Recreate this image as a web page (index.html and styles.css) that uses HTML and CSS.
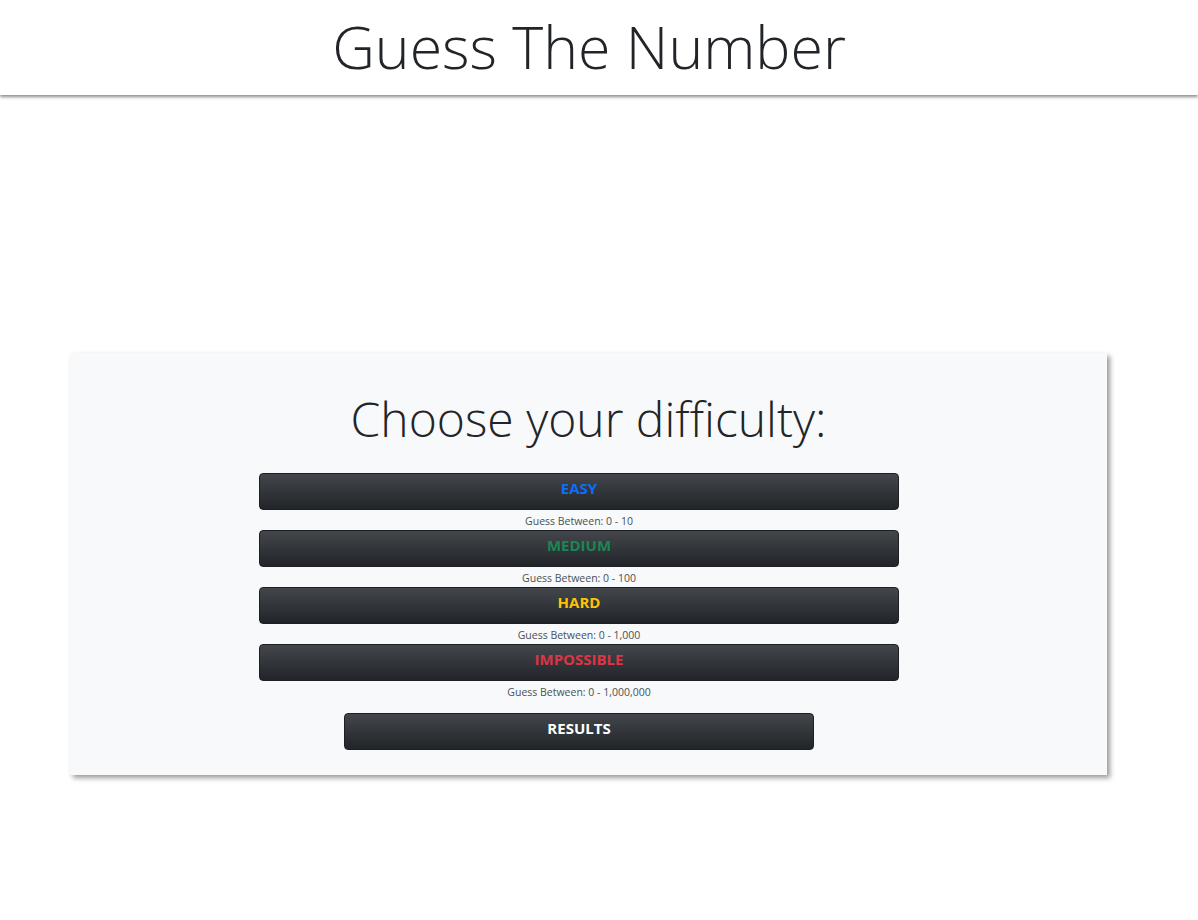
FILE: index.html
```html
<!DOCTYPE html>
<html lang="en">
<head>
<meta charset="utf-8">
<title>Guess The Number</title>
<link rel="stylesheet" href="styles.css">
</head>
<body>
<header class="topbar">
  <h1 class="title">Guess The Number</h1>
</header>
<main class="main">
  <section class="card">
    <h2 class="card-title">Choose your difficulty:</h2>
    <div class="levels">
      <div class="level">
        <button class="btn btn-easy">EASY</button>
        <p class="hint">Guess Between: 0 - 10</p>
      </div>
      <div class="level">
        <button class="btn btn-medium">MEDIUM</button>
        <p class="hint">Guess Between: 0 - 100</p>
      </div>
      <div class="level">
        <button class="btn btn-hard">HARD</button>
        <p class="hint">Guess Between: 0 - 1,000</p>
      </div>
      <div class="level">
        <button class="btn btn-impossible">IMPOSSIBLE</button>
        <p class="hint">Guess Between: 0 - 1,000,000</p>
      </div>
      <button class="btn btn-results">RESULTS</button>
    </div>
  </section>
</main>
</body>
</html>
```
FILE: styles.css
```css
* { box-sizing: border-box; }
html, body { margin: 0; padding: 0; background: #fff; }
body {
  font-family: "Open Sans", "Noto Sans", sans-serif;
  color: #212529;
}
.topbar {
  height: 95px;
  background: #fff;
  box-shadow: 0 2px 3px rgba(0,0,0,0.45);
  display: flex;
  justify-content: center;
  align-items: flex-start;
  padding-right: 20px;
  position: relative;
}
.title {
  margin: 8px 0 0;
  font-weight: 300;
  font-size: 59px;
  line-height: 76px;
  letter-spacing: 0;
}
.main {
  padding-top: 258px;
  padding-left: 70px;
  padding-bottom: 60px;
}
.card {
  width: 1037px;
  height: 422px;
  background: #f8f9fa;
  box-shadow: 3px 3px 5px rgba(0,0,0,0.4);
  padding-top: 36px;
}
.card-title {
  margin: 0;
  text-align: center;
  font-weight: 300;
  font-size: 48px;
  line-height: 60px;
}
.levels {
  margin-top: 24px;
  padding-left: 189px;
  padding-right: 208px;
  display: flex;
  flex-direction: column;
  align-items: center;
}
.level {
  width: 100%;
  display: flex;
  flex-direction: column;
  align-items: center;
}
.btn {
  display: block;
  width: 100%;
  height: 37px;
  border: 1px solid #1c1f23;
  border-radius: 4px;
  background: linear-gradient(to bottom, #43464a 0%, #212529 100%);
  font-family: "Open Sans", "Noto Sans", sans-serif;
  font-weight: 700;
  font-size: 15px;
  line-height: 20px;
  padding: 0 0 7px;
  cursor: pointer;
}
.btn-easy { color: #0d6efd; }
.btn-medium { color: #198754; }
.btn-hard { color: #ffc107; }
.btn-impossible { color: #dc3545; }
.btn-results {
  color: #fff;
  width: 470px;
  margin-top: 12px;
}
.hint {
  margin: 0;
  height: 20px;
  font-size: 10.5px;
  line-height: 22px;
  color: #495057;
}
```
